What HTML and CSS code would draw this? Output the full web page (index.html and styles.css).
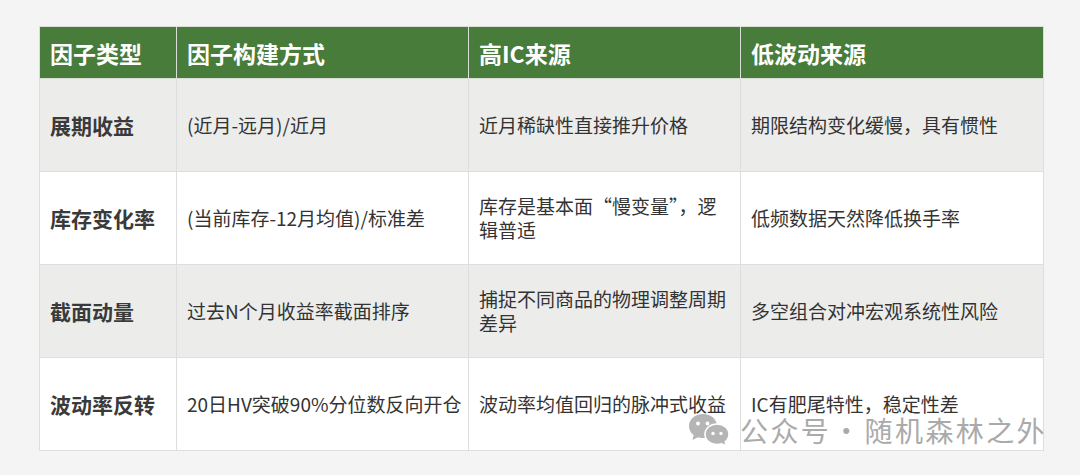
FILE: index.html
```html
<!DOCTYPE html>
<html lang="zh-CN">
<head>
<meta charset="utf-8">
<title>因子表</title>
<link rel="stylesheet" href="styles.css">
</head>
<body>
<div class="wrap">
  <table class="factors">
    <colgroup>
      <col class="c1"><col class="c2"><col class="c3"><col class="c4">
    </colgroup>
    <thead>
      <tr><th>因子类型</th><th>因子构建方式</th><th>高IC来源</th><th>低波动来源</th></tr>
    </thead>
    <tbody>
      <tr class="alt"><td class="name">展期收益</td><td>(近月-远月)/近月</td><td>近月稀缺性直接推升价格</td><td>期限结构变化缓慢，具有惯性</td></tr>
      <tr><td class="name">库存变化率</td><td>(当前库存-12月均值)/标准差</td><td>库存是基本面“慢变量”，逻辑普适</td><td>低频数据天然降低换手率</td></tr>
      <tr class="alt"><td class="name">截面动量</td><td>过去N个月收益率截面排序</td><td>捕捉不同商品的物理调整周期差异</td><td>多空组合对冲宏观系统性风险</td></tr>
      <tr><td class="name">波动率反转</td><td>20日HV突破90%分位数反向开仓</td><td>波动率均值回归的脉冲式收益</td><td>IC有肥尾特性，稳定性差</td></tr>
    </tbody>
  </table>
  <div class="watermark">
    <svg class="wx" viewBox="0 0 42 34" width="42" height="34" aria-hidden="true">
      <path d="M15 1 C23 1 29 6.5 29 13 C29 19.5 23 25 15 25 C13 25 11.5 24.7 10 24.2 L4.5 27 L5.6 22 C2.6 19.8 1 16.6 1 13 C1 6.5 7 1 15 1 Z" fill="#b5b5b5"/>
      <circle cx="10" cy="10.5" r="1.9" fill="#fff"/>
      <circle cx="19.5" cy="10.5" r="1.9" fill="#fff"/>
      <path d="M29 11 C35.8 11 41 15.6 41 21.3 C41 24.3 39.6 26.9 37.3 28.8 L38.2 33 L33.7 30.8 C32.2 31.3 30.6 31.6 29 31.6 C22.2 31.6 17 27 17 21.3 C17 15.6 22.2 11 29 11 Z" fill="#b5b5b5" stroke="#fff" stroke-width="1.6"/>
      <circle cx="25" cy="20.5" r="1.7" fill="#fff"/>
      <circle cx="33" cy="20.5" r="1.7" fill="#fff"/>
    </svg>
    <span class="wm-text">公众号<span class="wm-dot">·</span>随机森林之外</span>
  </div>
</div>
</body>
</html>
```

FILE: styles.css
```css
html, body {
  margin: 0;
  padding: 0;
}
body {
  background: #f4f4f4;
  font-family: "Noto Sans CJK SC", "Noto Sans", sans-serif;
  color: #333;
}
.wrap {
  position: relative;
  width: 1004px;
  margin: 26px 0 0 39px;
}
.factors {
  width: 1004px;
  table-layout: fixed;
  border-collapse: collapse;
  background: #fff;
}
.c1 { width: 137px; }
.c2 { width: 292px; }
.c3 { width: 272px; }
.c4 { width: 303px; }
.factors th,
.factors td {
  border: 1px solid #dedede;
  padding: 0 10px;
  text-align: left;
  vertical-align: middle;
}
.factors td:nth-child(2) {
  padding-right: 4px;
}
.factors th {
  background: #477c3a;
  color: #fff;
  font-size: 23px;
  font-weight: 700;
  height: 51px;
  border-color: #d9dfd6;
}
.factors td {
  height: 92px;
  font-size: 19px;
  line-height: 1.25;
  color: #333;
}
.factors tr.alt td {
  background: #ecedeb;
}
.factors td.name {
  font-size: 21px;
  font-weight: 700;
  color: #3a3a3a;
}
.watermark {
  position: absolute;
  left: 649px;
  top: 387px;
  display: flex;
  align-items: center;
  gap: 10px;
}
.wx {
  display: block;
}
.wm-text {
  font-size: 28px;
  letter-spacing: 2.4px;
  color: #aaaaaa;
  white-space: nowrap;
  line-height: 1;
}
.wm-dot {
  margin: 0 2px 0 1px;
}
```
